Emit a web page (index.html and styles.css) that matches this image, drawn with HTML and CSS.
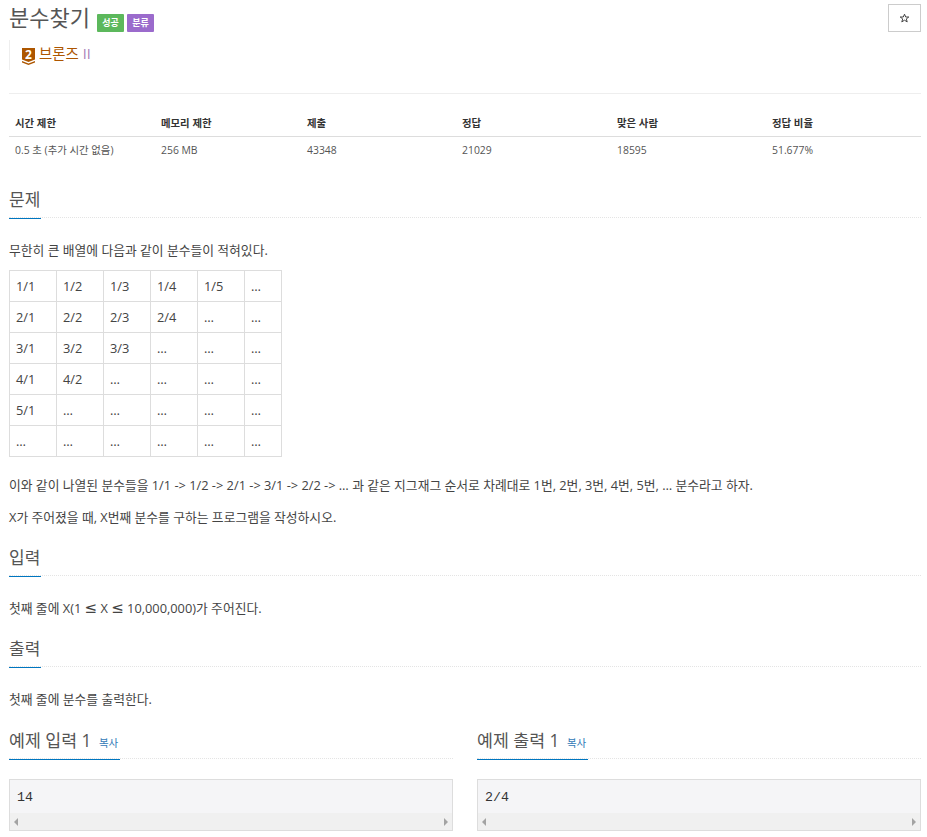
FILE: index.html
```html
<!DOCTYPE html>
<html lang="ko">
<head>
<meta charset="utf-8">
<title>분수찾기</title>
<link rel="stylesheet" href="styles.css">
</head>
<body>
<div class="page">
  <header class="head">
    <div class="head-main">
      <div class="title-row">
        <h1 class="title">분수찾기</h1>
        <span class="badge badge-green">성공</span>
        <span class="badge badge-purple">분류</span>
      </div>
      <div class="tier">
        <svg class="tier-icon" width="13" height="17" viewBox="0 0 13 17"><path d="M0 0H13V11.500L6.500 14L0 11.500Z" fill="#ad5600"/><path d="M0 13L6.500 15.500L13 13V14.500L6.500 17L0 14.500Z" fill="#ad5600"/></svg>
        <span class="tier-num">2</span>
        <span class="tier-name">브론즈</span>
        <span class="tier-level">II</span>
      </div>
    </div>
    <button class="star" type="button"><svg width="11" height="10" viewBox="0 0 11 10"><path d="M5.500 1.200L6.700 4H9.800L7.300 5.900L8.200 8.900L5.500 7.200L2.800 8.900L3.700 5.900L1.200 4H4.300Z" fill="none" stroke="#444" stroke-width="1"/></svg></button>
  </header>

  <table class="info">
    <thead>
      <tr><th class="c1">시간 제한</th><th class="c1">메모리 제한</th><th>제출</th><th>정답</th><th>맞은 사람</th><th>정답 비율</th></tr>
    </thead>
    <tbody>
      <tr><td>0.5 초 (추가 시간 없음)</td><td>256 MB</td><td>43348</td><td>21029</td><td>18595</td><td>51.677%</td></tr>
    </tbody>
  </table>

  <section class="sec sec-first">
    <div class="headline"><h2>문제</h2></div>
    <p class="lead">무한히 큰 배열에 다음과 같이 분수들이 적혀있다.</p>
    <table class="frac">
      <tr><td>1/1</td><td>1/2</td><td>1/3</td><td>1/4</td><td>1/5</td><td>…</td></tr>
      <tr><td>2/1</td><td>2/2</td><td>2/3</td><td>2/4</td><td>…</td><td>…</td></tr>
      <tr><td>3/1</td><td>3/2</td><td>3/3</td><td>…</td><td>…</td><td>…</td></tr>
      <tr><td>4/1</td><td>4/2</td><td>…</td><td>…</td><td>…</td><td>…</td></tr>
      <tr><td>5/1</td><td>…</td><td>…</td><td>…</td><td>…</td><td>…</td></tr>
      <tr><td>…</td><td>…</td><td>…</td><td>…</td><td>…</td><td>…</td></tr>
    </table>
    <p>이와 같이 나열된 분수들을 1/1 -&gt; 1/2 -&gt; 2/1 -&gt; 3/1 -&gt; 2/2 -&gt; … 과 같은 지그재그 순서로 차례대로 1번, 2번, 3번, 4번, 5번, … 분수라고 하자.</p>
    <p>X가 주어졌을 때, X번째 분수를 구하는 프로그램을 작성하시오.</p>
  </section>

  <section class="sec">
    <div class="headline"><h2>입력</h2></div>
    <p>첫째 줄에 X(1 <span class="leq">≤</span> X <span class="leq">≤</span> 10,000,000)가 주어진다.</p>
  </section>

  <section class="sec">
    <div class="headline"><h2>출력</h2></div>
    <p>첫째 줄에 분수를 출력한다.</p>
  </section>

  <div class="samples">
    <section class="sample">
      <div class="headline"><h2>예제 입력 1 <a class="copy">복사</a></h2></div>
      <div class="code">
        <pre>14</pre>
        <div class="scrollbar"><span class="arrow arrow-l"></span><span class="arrow arrow-r"></span></div>
      </div>
    </section>
    <section class="sample">
      <div class="headline"><h2>예제 출력 1 <a class="copy">복사</a></h2></div>
      <div class="code">
        <pre>2/4</pre>
        <div class="scrollbar"><span class="arrow arrow-l"></span><span class="arrow arrow-r"></span></div>
      </div>
    </section>
  </div>
</div>
</body>
</html>
```
FILE: styles.css
```css
* { box-sizing: border-box; }
html, body { margin: 0; padding: 0; background: #fff; }
body {
  font-family: "Open Sans", "Noto Sans CJK KR", sans-serif;
  font-size: 12.8px;
  line-height: 20px;
  color: #333;
}
.page { padding: 0 6px 0 9px; }
.head { display: flex; justify-content: space-between; align-items: flex-start; border-bottom: 1px solid #eee; height: 94px; }
.title-row { display: flex; align-items: flex-start; height: 40px; }
.title { margin: 0; font-size: 22px; font-weight: 400; line-height: 34px; color: #555; }
.badge { margin-top: 14px; height: 18px; width: 27px; margin-left: 3px; border-radius: 1px; color: #fff; font-size: 9px; font-weight: 700; line-height: 18px; text-align: center; }
.badge-green { background: #5cb85c; margin-left: 7px; }
.badge-purple { background: #9b6bcc; }
.tier { position: relative; display: flex; align-items: flex-start; gap: 3px; height: 30px; border-left: 1px solid #eee; padding: 4px 0 0 12px; font-size: 14.4px; }
.tier-icon { flex: none; margin-top: 4px; }
.tier-num { position: absolute; left: 12px; top: 7px; width: 13px; text-align: center; color: #fff; font-size: 12px; font-weight: 700; line-height: 16px; }
.tier-name { color: #ad5600; margin-left: 1px; }
.tier-level { color: #a880b8; margin-left: 1px; }
.star { display: flex; align-items: center; justify-content: center; width: 33px; height: 28px; margin-top: 4px; padding: 0; border: 1px solid #ccc; background: #fff; }
.info { width: 912px; margin-top: 15px; border-collapse: collapse; table-layout: fixed; font-size: 10.4px; }
.info th { width: 155px; height: 27px; padding: 2px 6px 0; text-align: left; font-weight: 700; color: #333; border-bottom: 1px solid #ddd; }
.info th.c1 { width: 146px; }
.info td { height: 28px; padding: 0 6px; color: #555; }
.headline { height: 43px; border-bottom: 1px dotted #e4e4e4; }
.headline h2 { display: inline-block; height: 44px; margin: 0; padding: 12px 1px 0 0; font-size: 17px; font-weight: 400; line-height: 26px; color: #555; border-bottom: 1px solid #0076c0; }
.sec .headline { margin-top: 6px; }
.sec-first .headline { margin-top: 11px; }
.sec p { margin: 0 0 12px; line-height: 20px; color: #444; }
.sec p:last-child { margin-bottom: 0; }
.sec p.lead { margin-bottom: 10px; }
.headline + p { margin-top: 22px; }
.leq { font-family: "DejaVu Sans", sans-serif; font-size: 15px; line-height: 1; }
.frac { border-collapse: collapse; margin: 0 0 18px; table-layout: fixed; width: 273px; }
.frac td { width: 47px; height: 31px; padding: 0 6px; border: 1px solid #ddd; color: #444; }
.frac td:last-child { width: 37px; }
.samples { display: grid; grid-template-columns: 444px 444px; column-gap: 24px; margin-top: 7px; }
.sample .headline h2 { width: 111px; font-size: 17.300px; white-space: nowrap; }
.copy { color: #337ab7; font-size: 10.5px; margin-left: 3px; }
.code { margin-top: 20px; height: 52px; border: 1px solid #ddd; background: #f5f5f7; }
.code pre { margin: 0; height: 33px; padding: 8px 7px 0; font-family: "Liberation Mono", monospace; font-size: 13.3px; line-height: 20px; color: #333; }
.scrollbar { height: 17px; background: #f0f0f0; display: flex; justify-content: space-between; align-items: center; padding: 0 4px; }
.arrow { width: 0; height: 0; border-top: 4px solid transparent; border-bottom: 4px solid transparent; }
.arrow-l { border-right: 4px solid #a3a3a3; }
.arrow-r { border-left: 4px solid #a3a3a3; }
```
